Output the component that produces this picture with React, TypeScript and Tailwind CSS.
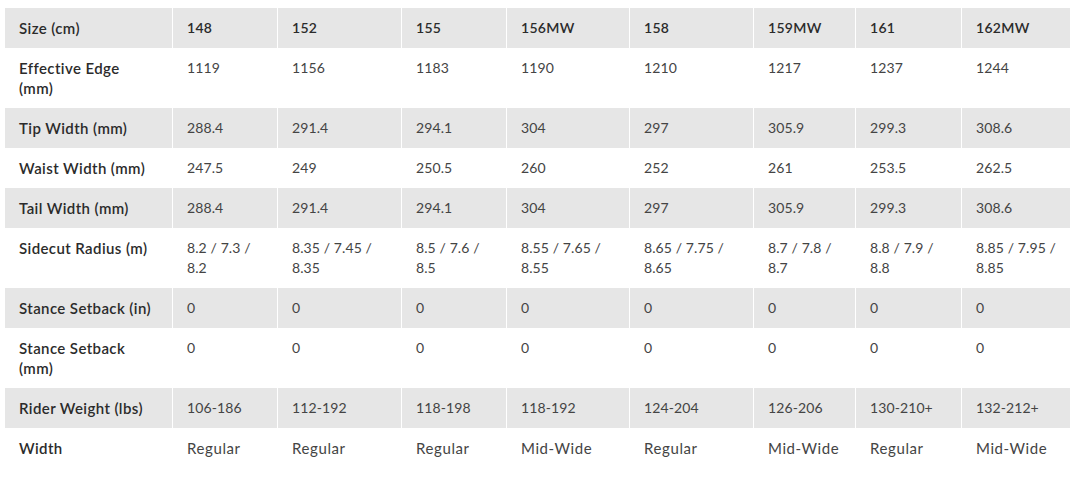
import React from "react";

const cols = ["148", "152", "155", "156MW", "158", "159MW", "161", "162MW"];

const rows: { label: string; values: string[] }[] = [
  { label: "Effective Edge\n(mm)", values: ["1119", "1156", "1183", "1190", "1210", "1217", "1237", "1244"] },
  { label: "Tip Width (mm)", values: ["288.4", "291.4", "294.1", "304", "297", "305.9", "299.3", "308.6"] },
  { label: "Waist Width (mm)", values: ["247.5", "249", "250.5", "260", "252", "261", "253.5", "262.5"] },
  { label: "Tail Width (mm)", values: ["288.4", "291.4", "294.1", "304", "297", "305.9", "299.3", "308.6"] },
  {
    label: "Sidecut Radius (m)",
    values: [
      "8.2 / 7.3 /\n8.2",
      "8.35 / 7.45 /\n8.35",
      "8.5 / 7.6 /\n8.5",
      "8.55 / 7.65 /\n8.55",
      "8.65 / 7.75 /\n8.65",
      "8.7 / 7.8 /\n8.7",
      "8.8 / 7.9 /\n8.8",
      "8.85 / 7.95 /\n8.85",
    ],
  },
  { label: "Stance Setback (in)", values: ["0", "0", "0", "0", "0", "0", "0", "0"] },
  { label: "Stance Setback\n(mm)", values: ["0", "0", "0", "0", "0", "0", "0", "0"] },
  { label: "Rider Weight (lbs)", values: ["106-186", "112-192", "118-198", "118-192", "124-204", "126-206", "130-210+", "132-212+"] },
  { label: "Width", values: ["Regular", "Regular", "Regular", "Mid-Wide", "Regular", "Mid-Wide", "Regular", "Mid-Wide"] },
];

function App() {
  return (
    <div
      className="min-h-screen w-full bg-white pl-[5px] pt-[8px]"
      style={{ fontFamily: "Lato, 'Noto Sans', sans-serif" }}
    >
      <div className="grid grid-cols-[167px_104px_123px_104px_122px_123px_101px_105px_109px] gap-x-px">
        {/* header row */}
        <div className="bg-[#e6e6e6] px-[14px] py-[10px] text-[15px] leading-5 font-semibold tracking-[0.4px] text-[#2b2b2b]">
          Size (cm)
        </div>
        {cols.map((c) => (
          <div
            key={c}
            className="bg-[#e6e6e6] px-[14px] py-[10px] text-[14px] leading-5 font-semibold tracking-[0.3px] text-[#2b2b2b]"
          >
            {c}
          </div>
        ))}
        {rows.map((row, i) => {
          const bg = i % 2 === 1 ? "bg-[#e6e6e6]" : "bg-white";
          const last = i === rows.length - 1;
          return (
            <React.Fragment key={row.label}>
              <div
                className={`${bg} whitespace-pre-line px-[14px] py-[10px] text-[15px] leading-5 font-semibold tracking-[0.4px] text-[#2b2b2b]`}
              >
                {row.label}
              </div>
              {row.values.map((v, j) => (
                <div
                  key={j}
                  className={`${bg} whitespace-pre-line px-[14px] py-[10px] leading-5 text-[#444444] ${
                    last ? "text-[15px] tracking-[0.6px]" : "text-[14px] tracking-[0.1px]"
                  }`}
                >
                  {v}
                </div>
              ))}
            </React.Fragment>
          );
        })}
      </div>
    </div>
  );
}

export default App;
